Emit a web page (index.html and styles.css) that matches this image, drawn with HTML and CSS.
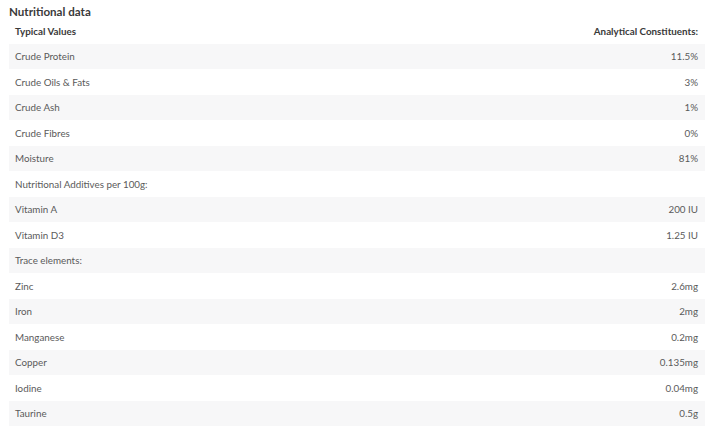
FILE: index.html
```html
<!DOCTYPE html>
<html lang="en">
<head>
    <meta charset="UTF-8">
    <meta name="viewport" content="width=device-width, initial-scale=1.0">
    <title>Nutritional data</title>
    <link rel="stylesheet" href="styles.css">
</head>
<body>

    <!-- Tabla de datos nutricionales -->
    <div class="nutricion">
        <h2>Nutritional data</h2>
        <table class="tabla">
            <thead>
                <tr>
                    <th>Typical Values</th>
                    <th class="valor">Analytical Constituents:</th>
                </tr>
            </thead>
            <tbody>
                <tr><td>Crude Protein</td><td class="valor">11.5%</td></tr>
                <tr><td>Crude Oils &amp; Fats</td><td class="valor">3%</td></tr>
                <tr><td>Crude Ash</td><td class="valor">1%</td></tr>
                <tr><td>Crude Fibres</td><td class="valor">0%</td></tr>
                <tr><td>Moisture</td><td class="valor">81%</td></tr>
                <tr><td>Nutritional Additives per 100g:</td><td class="valor"></td></tr>
                <tr><td>Vitamin A</td><td class="valor">200 IU</td></tr>
                <tr><td>Vitamin D3</td><td class="valor">1.25 IU</td></tr>
                <tr><td>Trace elements:</td><td class="valor"></td></tr>
                <tr><td>Zinc</td><td class="valor">2.6mg</td></tr>
                <tr><td>Iron</td><td class="valor">2mg</td></tr>
                <tr><td>Manganese</td><td class="valor">0.2mg</td></tr>
                <tr><td>Copper</td><td class="valor">0.135mg</td></tr>
                <tr><td>Iodine</td><td class="valor">0.04mg</td></tr>
                <tr><td>Taurine</td><td class="valor">0.5g</td></tr>
            </tbody>
        </table>
    </div>

</body>
</html>
```

FILE: styles.css
```css
body {
    font-family: Lato, "Noto Sans", Arial, sans-serif;
    background-color: #ffffff;
    color: #5a5a5a;
    margin: 0;
    padding: 5px 7px 0 9px;
}
.nutricion h2 {
    font-size: 11.6px;
    font-weight: bold;
    color: #3a3a3a;
    margin: 0;
    line-height: 13px;
}
.tabla {
    width: 100%;
    border-collapse: collapse;
    font-size: 9.8px;
}
.tabla th,
.tabla td {
    height: 25.5px;
    padding: 0 7px 0 6px;
    text-align: left;
    box-sizing: border-box;
}
.tabla th {
    color: #3a3a3a;
    font-weight: bold;
}
.tabla tbody tr:nth-child(odd) {
    background-color: #f7f7f8;
}
.tabla .valor {
    text-align: right;
}
```
